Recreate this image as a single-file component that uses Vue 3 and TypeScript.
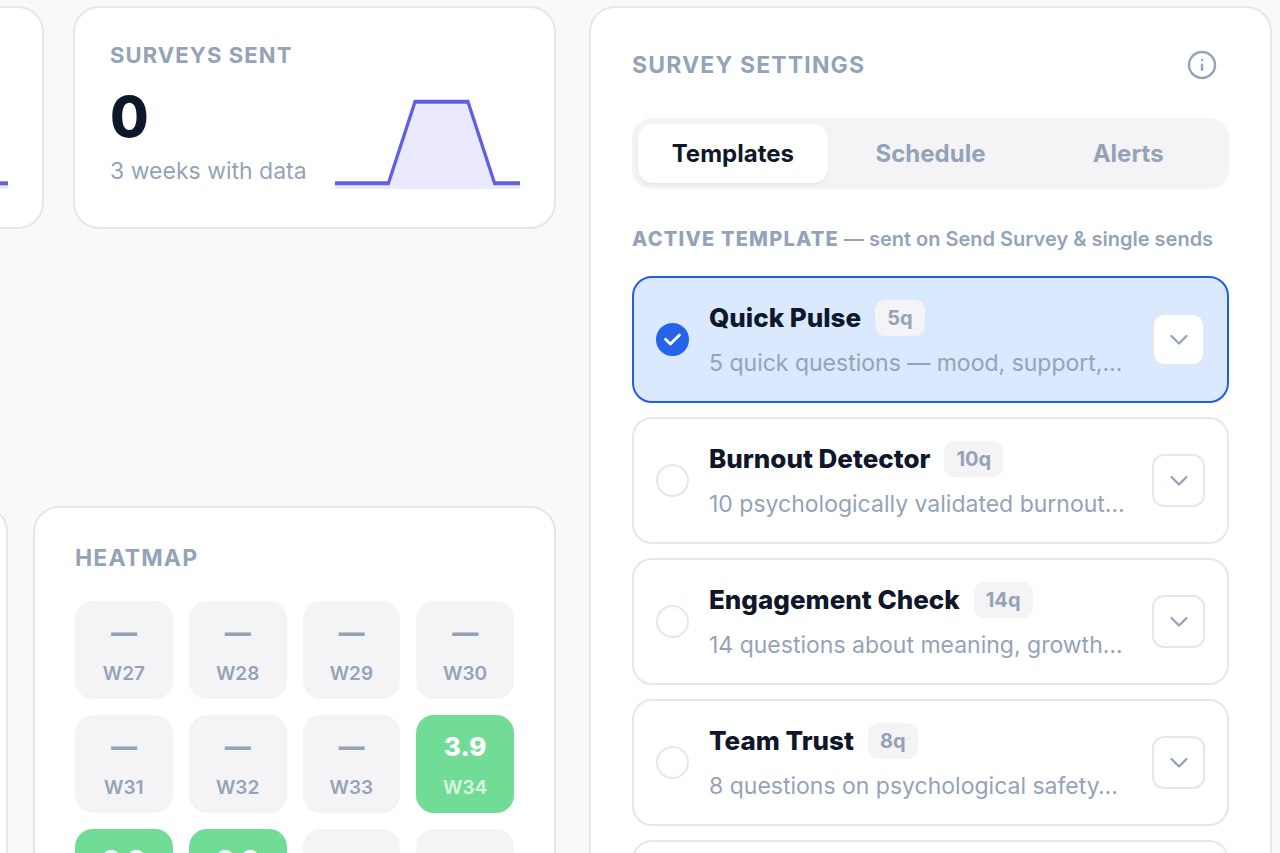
<script setup lang="ts">
import { ref } from 'vue'

interface Week {
  label: string
  score?: string
}

interface Template {
  id: string
  name: string
  count: string
  summary: string
}

const weeks: Week[] = [
  { label: 'W27' },
  { label: 'W28' },
  { label: 'W29' },
  { label: 'W30' },
  { label: 'W31' },
  { label: 'W32' },
  { label: 'W33' },
  { label: 'W34', score: '3.9' },
  { label: 'W35', score: '3.9' },
  { label: 'W36', score: '3.8' },
  { label: 'W37' },
  { label: 'W38' },
]

const templates: Template[] = [
  { id: 'pulse', name: 'Quick Pulse', count: '5q', summary: '5 quick questions — mood, support,…' },
  { id: 'burnout', name: 'Burnout Detector', count: '10q', summary: '10 psychologically validated burnout…' },
  { id: 'engagement', name: 'Engagement Check', count: '14q', summary: '14 questions about meaning, growth…' },
  { id: 'trust', name: 'Team Trust', count: '8q', summary: '8 questions on psychological safety…' },
]

const tabs = ['Templates', 'Schedule', 'Alerts']
const activeTab = ref('Templates')
const selected = ref('pulse')
</script>

<template>
  <main class="page">
    <div class="overview">
      <div class="stats">
        <section class="card stat cut">
          <svg class="spark" viewBox="0 0 80 32" preserveAspectRatio="none" aria-hidden="true">
            <rect class="area" x="0" y="30" width="80" height="2" />
            <path class="line" d="M0 30H80" />
          </svg>
        </section>
        <section class="card stat">
          <h2 class="stat-title">Surveys sent</h2>
          <div class="stat-body">
            <div>
              <div class="stat-value">0</div>
              <div class="stat-note">3 weeks with data</div>
            </div>
            <svg class="spark" viewBox="0 0 80 32" preserveAspectRatio="none" aria-hidden="true">
              <path class="area" d="M0 30H23.1L34.6 1.3H57.5L69 30H80V32H0Z" />
              <path class="line" d="M0 30H23.1L34.6 1.3H57.5L69 30H80" />
            </svg>
          </div>
        </section>
      </div>

      <div class="lower">
        <section class="card bleed"></section>
        <section class="card heatmap">
          <h2 class="title">Heatmap</h2>
          <div class="tiles">
            <div v-for="w in weeks" :key="w.label" class="tile" :class="{ good: w.score }">
              <span class="score">{{ w.score ?? '—' }}</span>
              <span class="week">{{ w.label }}</span>
            </div>
          </div>
        </section>
      </div>
    </div>

    <section class="card settings">
      <header class="settings-head">
        <h2 class="title">Survey settings</h2>
        <button class="info" type="button" aria-label="About survey settings">
          <svg viewBox="0 0 30 30" aria-hidden="true">
            <circle cx="15" cy="15" r="13" />
            <path d="M15 14.600v5.200M15 10v.1" />
          </svg>
        </button>
      </header>

      <div class="tabs" role="tablist">
        <button
          v-for="t in tabs"
          :key="t"
          type="button"
          role="tab"
          class="tab"
          :class="{ active: t === activeTab }"
          :aria-selected="t === activeTab"
          @click="activeTab = t"
        >
          {{ t }}
        </button>
      </div>

      <p class="hint"><strong>Active template</strong> — sent on Send Survey &amp; single sends</p>

      <ul class="templates">
        <li v-for="t in templates" :key="t.id" class="template" :class="{ chosen: t.id === selected }">
          <span class="pick">
            <input :id="t.id" v-model="selected" type="radio" name="template" :value="t.id" />
            <svg v-if="t.id === selected" viewBox="0 0 33 33" aria-hidden="true">
              <path d="M9.500 16.300l4.800 4.800l9.200-9.200" />
            </svg>
          </span>
          <label class="info-text" :for="t.id">
            <span class="name-row">
              <span class="name">{{ t.name }}</span>
              <span class="count">{{ t.count }}</span>
            </span>
            <span class="summary">{{ t.summary }}</span>
          </label>
          <button class="expand" type="button" :aria-label="`Show ${t.name} questions`">
            <svg viewBox="0 0 20 20" aria-hidden="true"><path d="M2.500 6l7.500 7.500l7.500-7.500" /></svg>
          </button>
        </li>
        <li class="template"></li>
      </ul>
    </section>
  </main>
</template>

<style>
body {
  margin: 0;
  background: #f9f9f9;
}
</style>

<style scoped>
* {
  box-sizing: border-box;
}

.page {
  display: grid;
  grid-template-columns: minmax(0, 556fr) minmax(0, 683fr);
  gap: 33px;
  height: 100vh;
  padding: 6px 8px 0 0;
  overflow: hidden;
  font-family: Inter, "Liberation Sans", sans-serif;
  color: #0f172a;
}

.card {
  background: #fff;
  border: 2px solid #e2e8f0;
  border-radius: 26px;
}

.cut {
  border-left: 0;
  border-radius: 0 26px 26px 0;
}

.bleed {
  margin-left: -60px;
}

h2,
p,
ul {
  margin: 0;
  padding: 0;
}

button {
  font: inherit;
  color: inherit;
  cursor: pointer;
}

.overview {
  display: flex;
  flex-direction: column;
  gap: 277px;
}

.stats {
  display: grid;
  grid-template-columns: minmax(0, 44fr) minmax(0, 483fr);
  gap: 29px;
}

.lower {
  display: grid;
  grid-template-columns: minmax(0, 8fr) minmax(0, 523fr);
  gap: 25px;
}

.stat {
  padding: 33px 34px 38px 35px;
}

.stat.cut {
  display: flex;
  align-items: flex-end;
  padding-left: 0;
}

.stat.cut .spark {
  width: 100%;
}

.title,
.stat-title {
  font-weight: 700;
  letter-spacing: 0.05em;
  text-transform: uppercase;
  color: #94a3b8;
}

.title {
  font-size: 23px;
  line-height: 30px;
}

.stat-title {
  font-size: 22px;
  line-height: 28px;
}

.stat-body {
  display: flex;
  align-items: flex-end;
  justify-content: space-between;
  gap: 20px;
}

.stat-value {
  margin-top: 20px;
  font-size: 56px;
  font-weight: 800;
  line-height: 56px;
}

.stat-note {
  margin: 11px 0 3px;
  font-size: 23px;
  line-height: 30px;
  color: #94a3b8;
  white-space: nowrap;
}

.spark {
  display: block;
  width: 185px;
  height: 91px;
}

.area {
  fill: #ebe9fd;
}

.line {
  fill: none;
  stroke: #6060e2;
  stroke-width: 1.4;
}

.heatmap {
  padding: 35px 40px;
}

.tiles {
  display: grid;
  grid-template-columns: repeat(4, 1fr);
  gap: 16px;
  margin-top: 28px;
}

.tile {
  display: flex;
  flex-direction: column;
  align-items: center;
  justify-content: center;
  gap: 13px;
  aspect-ratio: 1;
  padding-top: 3px;
  border-radius: 18px;
  background: #f4f4f6;
  color: #94a3b8;
}

.score {
  font-size: 26px;
  font-weight: 800;
  line-height: 32px;
}

.week {
  font-size: 19px;
  font-weight: 600;
  line-height: 24px;
}

.good {
  background: #71dc96;
  color: #fff;
}

.good .week {
  opacity: 0.75;
}

.settings {
  padding: 42px 41px 0;
}

.settings-head {
  display: flex;
  align-items: center;
  justify-content: space-between;
  padding-right: 12px;
}

.info {
  padding: 0;
  border: 0;
  background: none;
}

.info svg {
  display: block;
  width: 30px;
  height: 30px;
  fill: none;
  stroke: #94a3b8;
  stroke-width: 2.4;
  stroke-linecap: round;
}

.tabs {
  display: grid;
  grid-template-columns: repeat(3, 1fr);
  gap: 8px;
  margin-top: 38px;
  padding: 6px;
  border-radius: 20px;
  background: #f4f4f6;
}

.tab {
  height: 59px;
  padding: 0;
  border: 0;
  border-radius: 15px;
  background: none;
  font-size: 24px;
  font-weight: 700;
  color: #94a3b8;
}

.tab.active {
  background: #fff;
  color: #0f172a;
  box-shadow: 0 2px 4px rgb(0 0 0 / 6%);
}

.hint {
  margin-top: 36px;
  font-size: 20px;
  font-weight: 600;
  line-height: 28px;
  color: #94a3b8;
  white-space: nowrap;
}

.hint strong {
  font-weight: 800;
  letter-spacing: 0.06em;
  text-transform: uppercase;
}

.templates {
  display: flex;
  flex-direction: column;
  gap: 14px;
  margin-top: 23px;
  list-style: none;
}

.template {
  display: flex;
  align-items: center;
  gap: 20px;
  min-height: 127px;
  padding: 22px;
  border: 2px solid #e2e8f0;
  border-radius: 20px;
}

.template.chosen {
  border-color: #2160dc;
  background: #dbe9fe;
}

.pick {
  display: grid;
  flex: none;
}

.pick > * {
  grid-area: 1 / 1;
  width: 33px;
  height: 33px;
}

.pick input {
  margin: 0;
  appearance: none;
  border: 2px solid #e2e8f0;
  border-radius: 50%;
}

.pick input:checked {
  border-color: #2563eb;
  background: #2563eb;
}

.pick svg {
  fill: none;
  stroke: #fff;
  stroke-width: 2.8;
  stroke-linecap: round;
  stroke-linejoin: round;
  pointer-events: none;
}

.info-text {
  flex: 1;
  min-width: 0;
}

.name-row {
  display: flex;
  align-items: center;
  gap: 14px;
}

.name {
  font-size: 26px;
  font-weight: 800;
  line-height: 36px;
}

.count {
  padding: 0 12px;
  border-radius: 10px;
  background: #f4f4f6;
  font-size: 20px;
  font-weight: 700;
  line-height: 36px;
  color: #94a3b8;
}

.summary {
  display: block;
  margin-top: 11px;
  overflow: hidden;
  font-size: 23px;
  line-height: 32px;
  color: #94a3b8;
  white-space: nowrap;
}

.expand {
  display: grid;
  flex: none;
  place-items: center;
  width: 53px;
  height: 53px;
  padding: 0;
  border: 2px solid #e2e8f0;
  border-radius: 12px;
  background: #fff;
}

.expand svg {
  width: 20px;
  height: 20px;
  fill: none;
  stroke: #94a3b8;
  stroke-width: 2.3;
  stroke-linecap: round;
  stroke-linejoin: round;
}
</style>
